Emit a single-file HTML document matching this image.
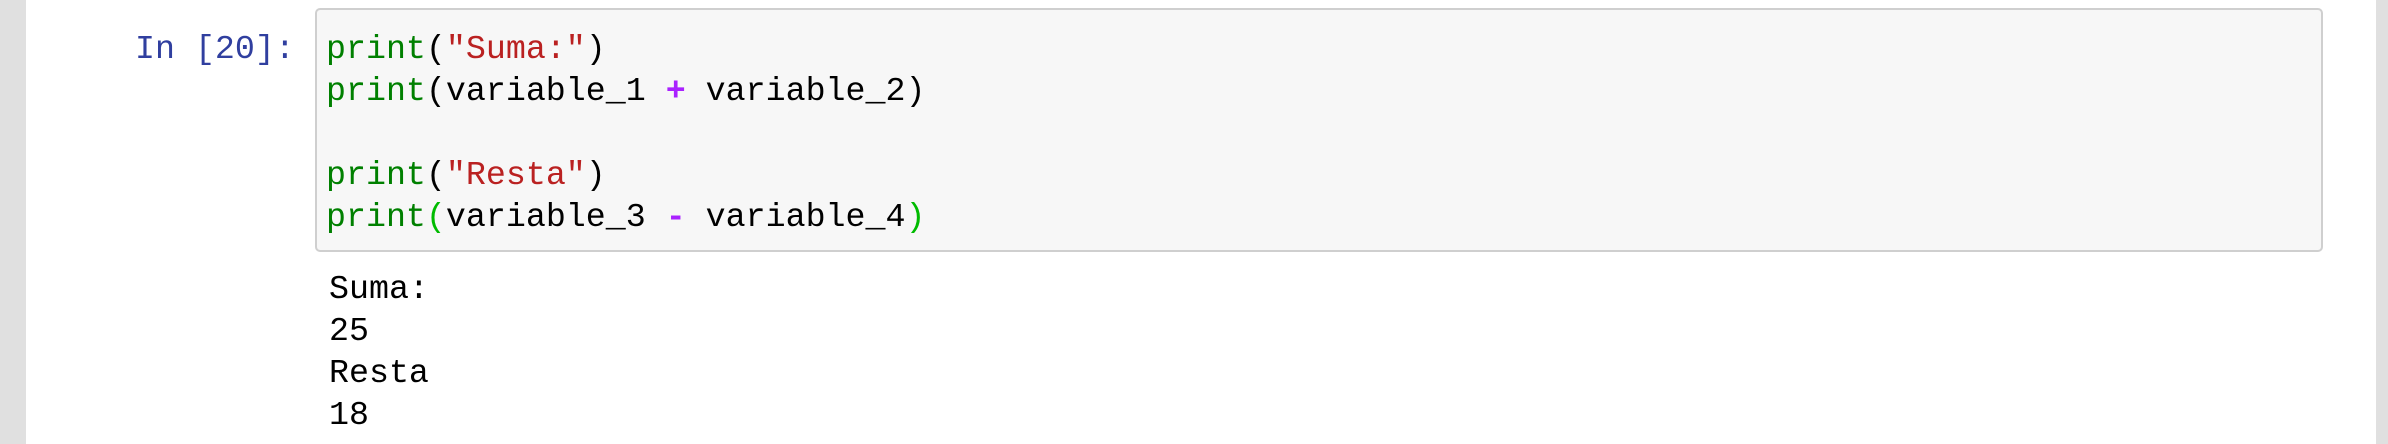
<!DOCTYPE html>
<html><head><style>
html,body{margin:0;padding:0;width:2388px;height:444px;overflow:hidden;background:#fff;}
.lb{position:absolute;left:0;top:0;width:26px;height:444px;background:#e0e0e0;}
.rb{position:absolute;left:2376px;top:0;width:12px;height:444px;background:#e0e0e0;}
.box{position:absolute;left:315px;top:8px;width:2004px;height:240px;background:#f7f7f7;border:2px solid #cfcfcf;border-radius:5px;}
.t{position:absolute;font-family:"Liberation Mono",monospace;font-size:33.3px;line-height:42px;white-space:pre;color:#000;}
.p{left:135px;top:28px;color:#303f9f;}
.code{left:326px;top:28px;}
.out{left:329px;top:268px;}
.g{color:#008000}.s{color:#ba2121}.o{color:#aa22ff;font-weight:bold}.m{color:#00bb00}
</style></head><body>
<div class="lb"></div><div class="rb"></div>
<div class="box"></div>
<div class="t p">In [20]:</div>
<div class="t code"><span class="g">print</span>(<span class="s">"Suma:"</span>)
<span class="g">print</span>(variable_1 <span class="o">+</span> variable_2)

<span class="g">print</span>(<span class="s">"Resta"</span>)
<span class="g">print</span><span class="m">(</span>variable_3 <span class="o">-</span> variable_4<span class="m">)</span></div>
<div class="t out">Suma:
25
Resta
18</div>
</body></html>
